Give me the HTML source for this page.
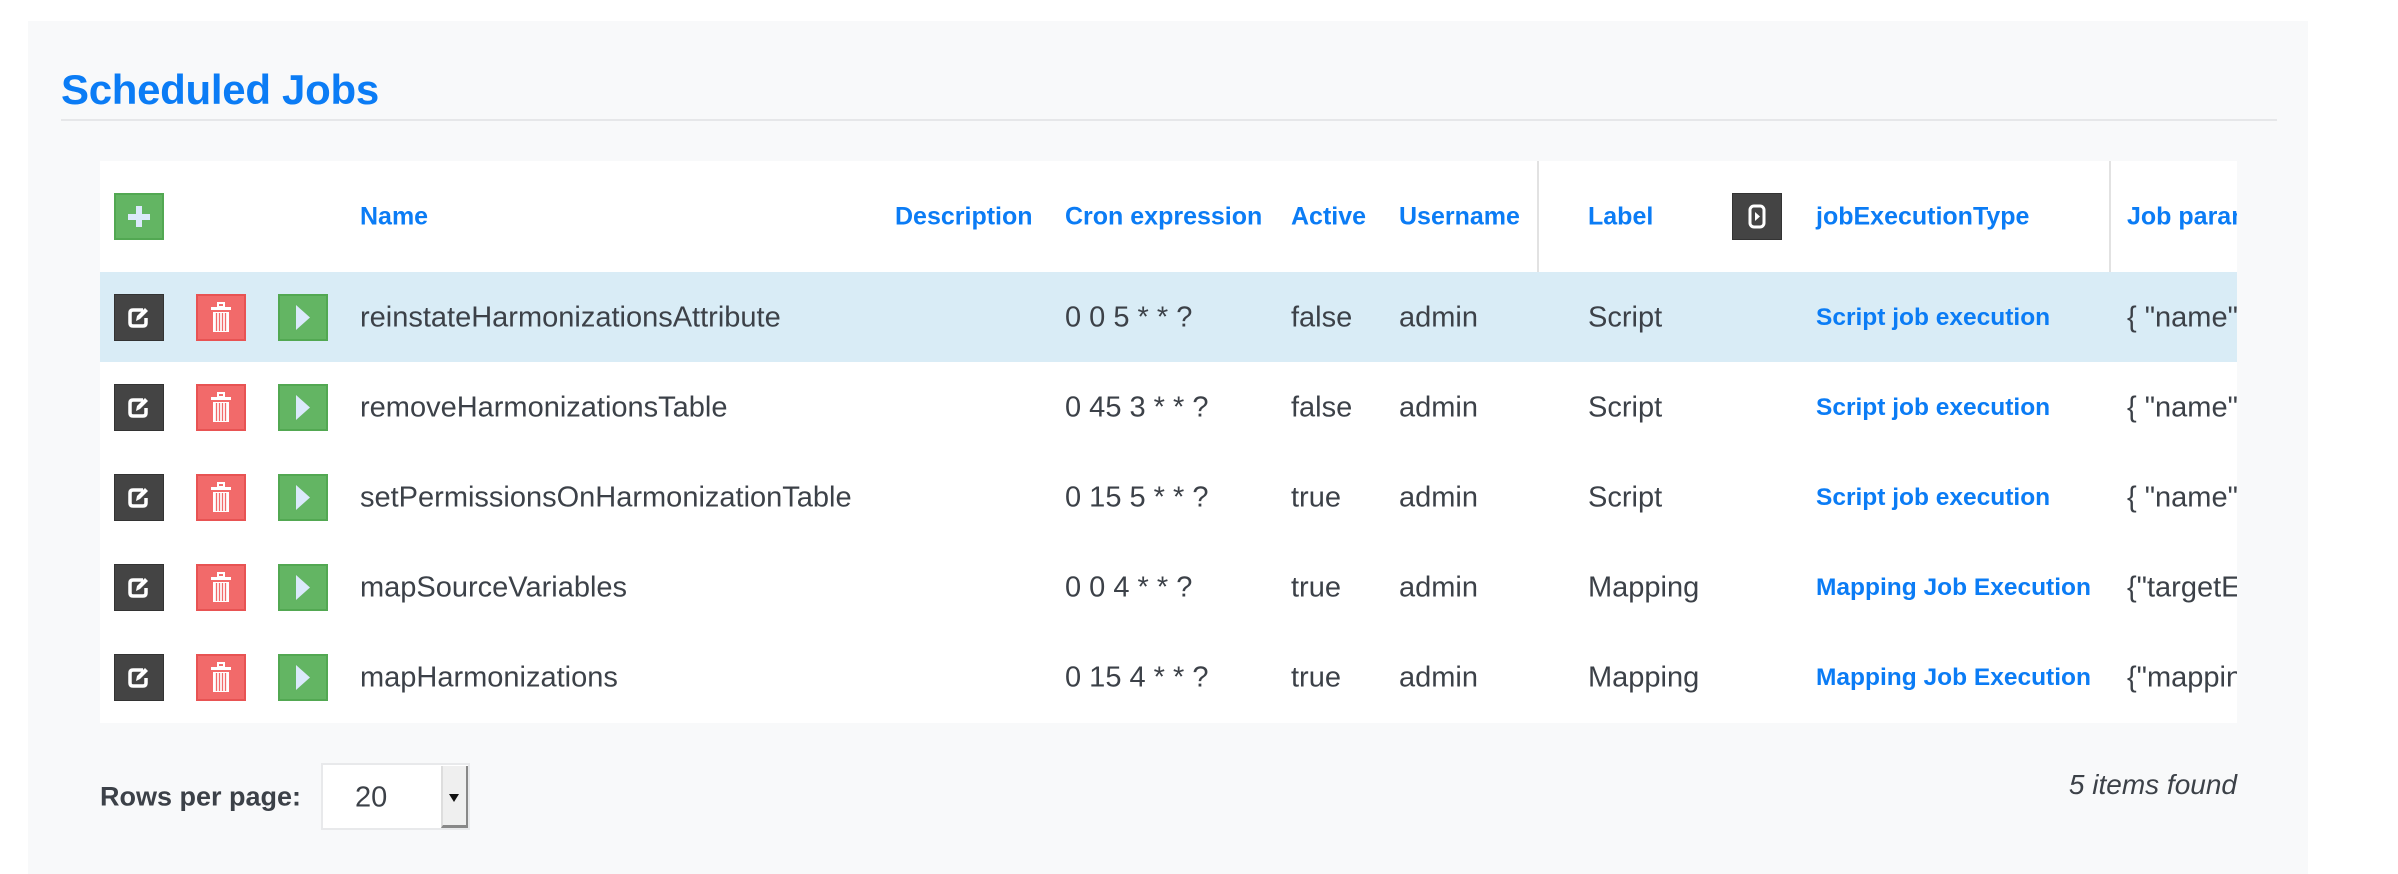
<!DOCTYPE html>
<html><head><meta charset="utf-8"><style>
*{margin:0;padding:0;box-sizing:border-box}
body{width:2398px;height:874px;background:#fff;font-family:"Liberation Sans",sans-serif;position:relative;overflow:hidden;color:#3c4148}
.panel{position:absolute;left:28px;top:21px;width:2280px;height:853px;background:#f8f9fa}
.title{position:absolute;left:61px;top:66px;font-size:42px;font-weight:bold;color:#0b7cf5;letter-spacing:-0.3px}
.hr{position:absolute;left:61px;top:119px;width:2216px;height:2px;background:#e6e7e9}
.table{position:absolute;left:100px;top:161px;width:2137px;height:562px;background:#fff;overflow:hidden}
.hl{position:absolute;left:100px;top:272px;width:2137px;height:90px;background:#d9ecf6}
.t{position:absolute;white-space:nowrap;transform:translateY(-50%)}
.h{font-size:25px;font-weight:bold;color:#0b7cf5}
.c{font-size:29px;color:#3c4148}
.l{font-size:24.5px;font-weight:bold;color:#0b7cf5}
.btn{position:absolute;width:50px;height:47px}
.e{background:#444;border:1px solid #333}
.d{background:#f26a6a;border:2px solid #e85353}
.p{background:#63b563;border:2px solid #52a852}
.vl{position:absolute;top:161px;width:2px;height:111px;background:#e2e2e2}
.clip{position:absolute;left:100px;top:0;width:2137px;height:874px;overflow:hidden}
</style></head><body>
<div class="panel"></div>
<div class="title">Scheduled Jobs</div>
<div class="hr"></div>
<div class="table"></div>
<div class="hl"></div>
<div class="vl" style="left:1537px"></div>
<div class="vl" style="left:2109px"></div>

<div class="btn p" style="left:114px;top:193px"><svg width="46" height="43" viewBox="0 0 46 43"><rect x="20" y="11" width="6" height="21" fill="#dbe9fb"/><rect x="12" y="19" width="22" height="6" fill="#dbe9fb"/></svg></div>
<div class="btn e" style="left:1732px;top:193px"><svg width="48" height="45" viewBox="0 0 48 45"><rect x="17" y="12" width="14" height="21" rx="4" fill="none" stroke="#fff" stroke-width="3"/><path d="M22 18 L27 22.5 L22 27Z" fill="#fff"/></svg></div>

<div class="t h" style="left:360px;top:217px">Name</div>
<div class="t h" style="left:895px;top:217px">Description</div>
<div class="t h" style="left:1065px;top:217px">Cron expression</div>
<div class="t h" style="left:1291px;top:217px">Active</div>
<div class="t h" style="left:1399px;top:217px">Username</div>
<div class="t h" style="left:1588px;top:217px">Label</div>
<div class="t h" style="left:1816px;top:217px">jobExecutionType</div>
<div class="clip"><div class="t h" style="left:2027px;top:217px">Job parameters</div></div>

<div id="rows"></div>
<script>
var rows=[["reinstateHarmonizationsAttribute","0 0 5 * * ?","false","Script","Script job execution","{ \"name\": \"x\" }"],
["removeHarmonizationsTable","0 45 3 * * ?","false","Script","Script job execution","{ \"name\": \"x\" }"],
["setPermissionsOnHarmonizationTable","0 15 5 * * ?","true","Script","Script job execution","{ \"name\": \"x\" }"],
["mapSourceVariables","0 0 4 * * ?","true","Mapping","Mapping Job Execution","{\"targetEntity\"}"],
["mapHarmonizations","0 15 4 * * ?","true","Mapping","Mapping Job Execution","{\"mappings\"}"]];
var h="";
var edit='<svg width="48" height="45" viewBox="0 0 48 45"><path d="M28 15 H18 Q15 15 15 18 V28 Q15 31 18 31 H28 Q31 31 31 28 V23" fill="none" stroke="#fff" stroke-width="3.5"/><path d="M21 26 L22 21 L30 13 L33 16 L25 24 Z" fill="#fff"/></svg>';
var del='<svg width="46" height="43" viewBox="0 0 46 43"><rect x="20" y="7" width="6" height="4" fill="none" stroke="#fff" stroke-width="2"/><rect x="13" y="11" width="20" height="3" fill="#fff"/><rect x="15" y="16" width="16" height="20" fill="#fff"/><path d="M18.5 17 V35 M21.5 17 V35 M24.5 17 V35 M27.5 17 V35" stroke="#f26a6a" stroke-width="1.3"/></svg>';
var play='<svg width="46" height="43" viewBox="0 0 46 43"><path d="M16 9 L30 21.5 L16 34Z" fill="#dbe9fb"/></svg>';
rows.forEach(function(r,i){var cy=318+i*90;var bt=cy-24;
h+='<div class="btn e" style="left:114px;top:'+bt+'px">'+edit+'</div>';
h+='<div class="btn d" style="left:196px;top:'+bt+'px">'+del+'</div>';
h+='<div class="btn p" style="left:278px;top:'+bt+'px">'+play+'</div>';
h+='<div class="t c" style="left:360px;top:'+cy+'px">'+r[0]+'</div>';
h+='<div class="t c" style="left:1065px;top:'+cy+'px">'+r[1]+'</div>';
h+='<div class="t c" style="left:1291px;top:'+cy+'px">'+r[2]+'</div>';
h+='<div class="t c" style="left:1399px;top:'+cy+'px">admin</div>';
h+='<div class="t c" style="left:1588px;top:'+cy+'px">'+r[3]+'</div>';
h+='<div class="t l" style="left:1816px;top:'+cy+'px">'+r[4]+'</div>';
h+='<div class="clip"><div class="t c" style="left:2027px;top:'+cy+'px">'+r[5].replace(/"/g,'&quot;')+'</div></div>';
});
document.getElementById('rows').innerHTML=h;
</script>

<div class="t" style="left:100px;top:797px;font-size:27px;font-weight:bold;color:#3c4148">Rows per page:</div>
<div style="position:absolute;left:321px;top:763px;width:149px;height:67px;background:#fff;border:2px solid #e8e9eb"></div>
<div class="t" style="left:355px;top:798px;font-size:29px;color:#3c4148">20</div>
<div style="position:absolute;left:441px;top:766px;width:27px;height:62px;background:#efefef;border-left:2px solid #ddd;border-bottom:3px solid #888;border-right:2px solid #888"></div>
<div style="position:absolute;left:449px;top:794px;width:0;height:0;border-left:5px solid transparent;border-right:5px solid transparent;border-top:8px solid #111"></div>
<div class="t" style="right:161px;top:785px;font-size:28px;font-style:italic;color:#3c4148">5 items found</div>
</body></html>
